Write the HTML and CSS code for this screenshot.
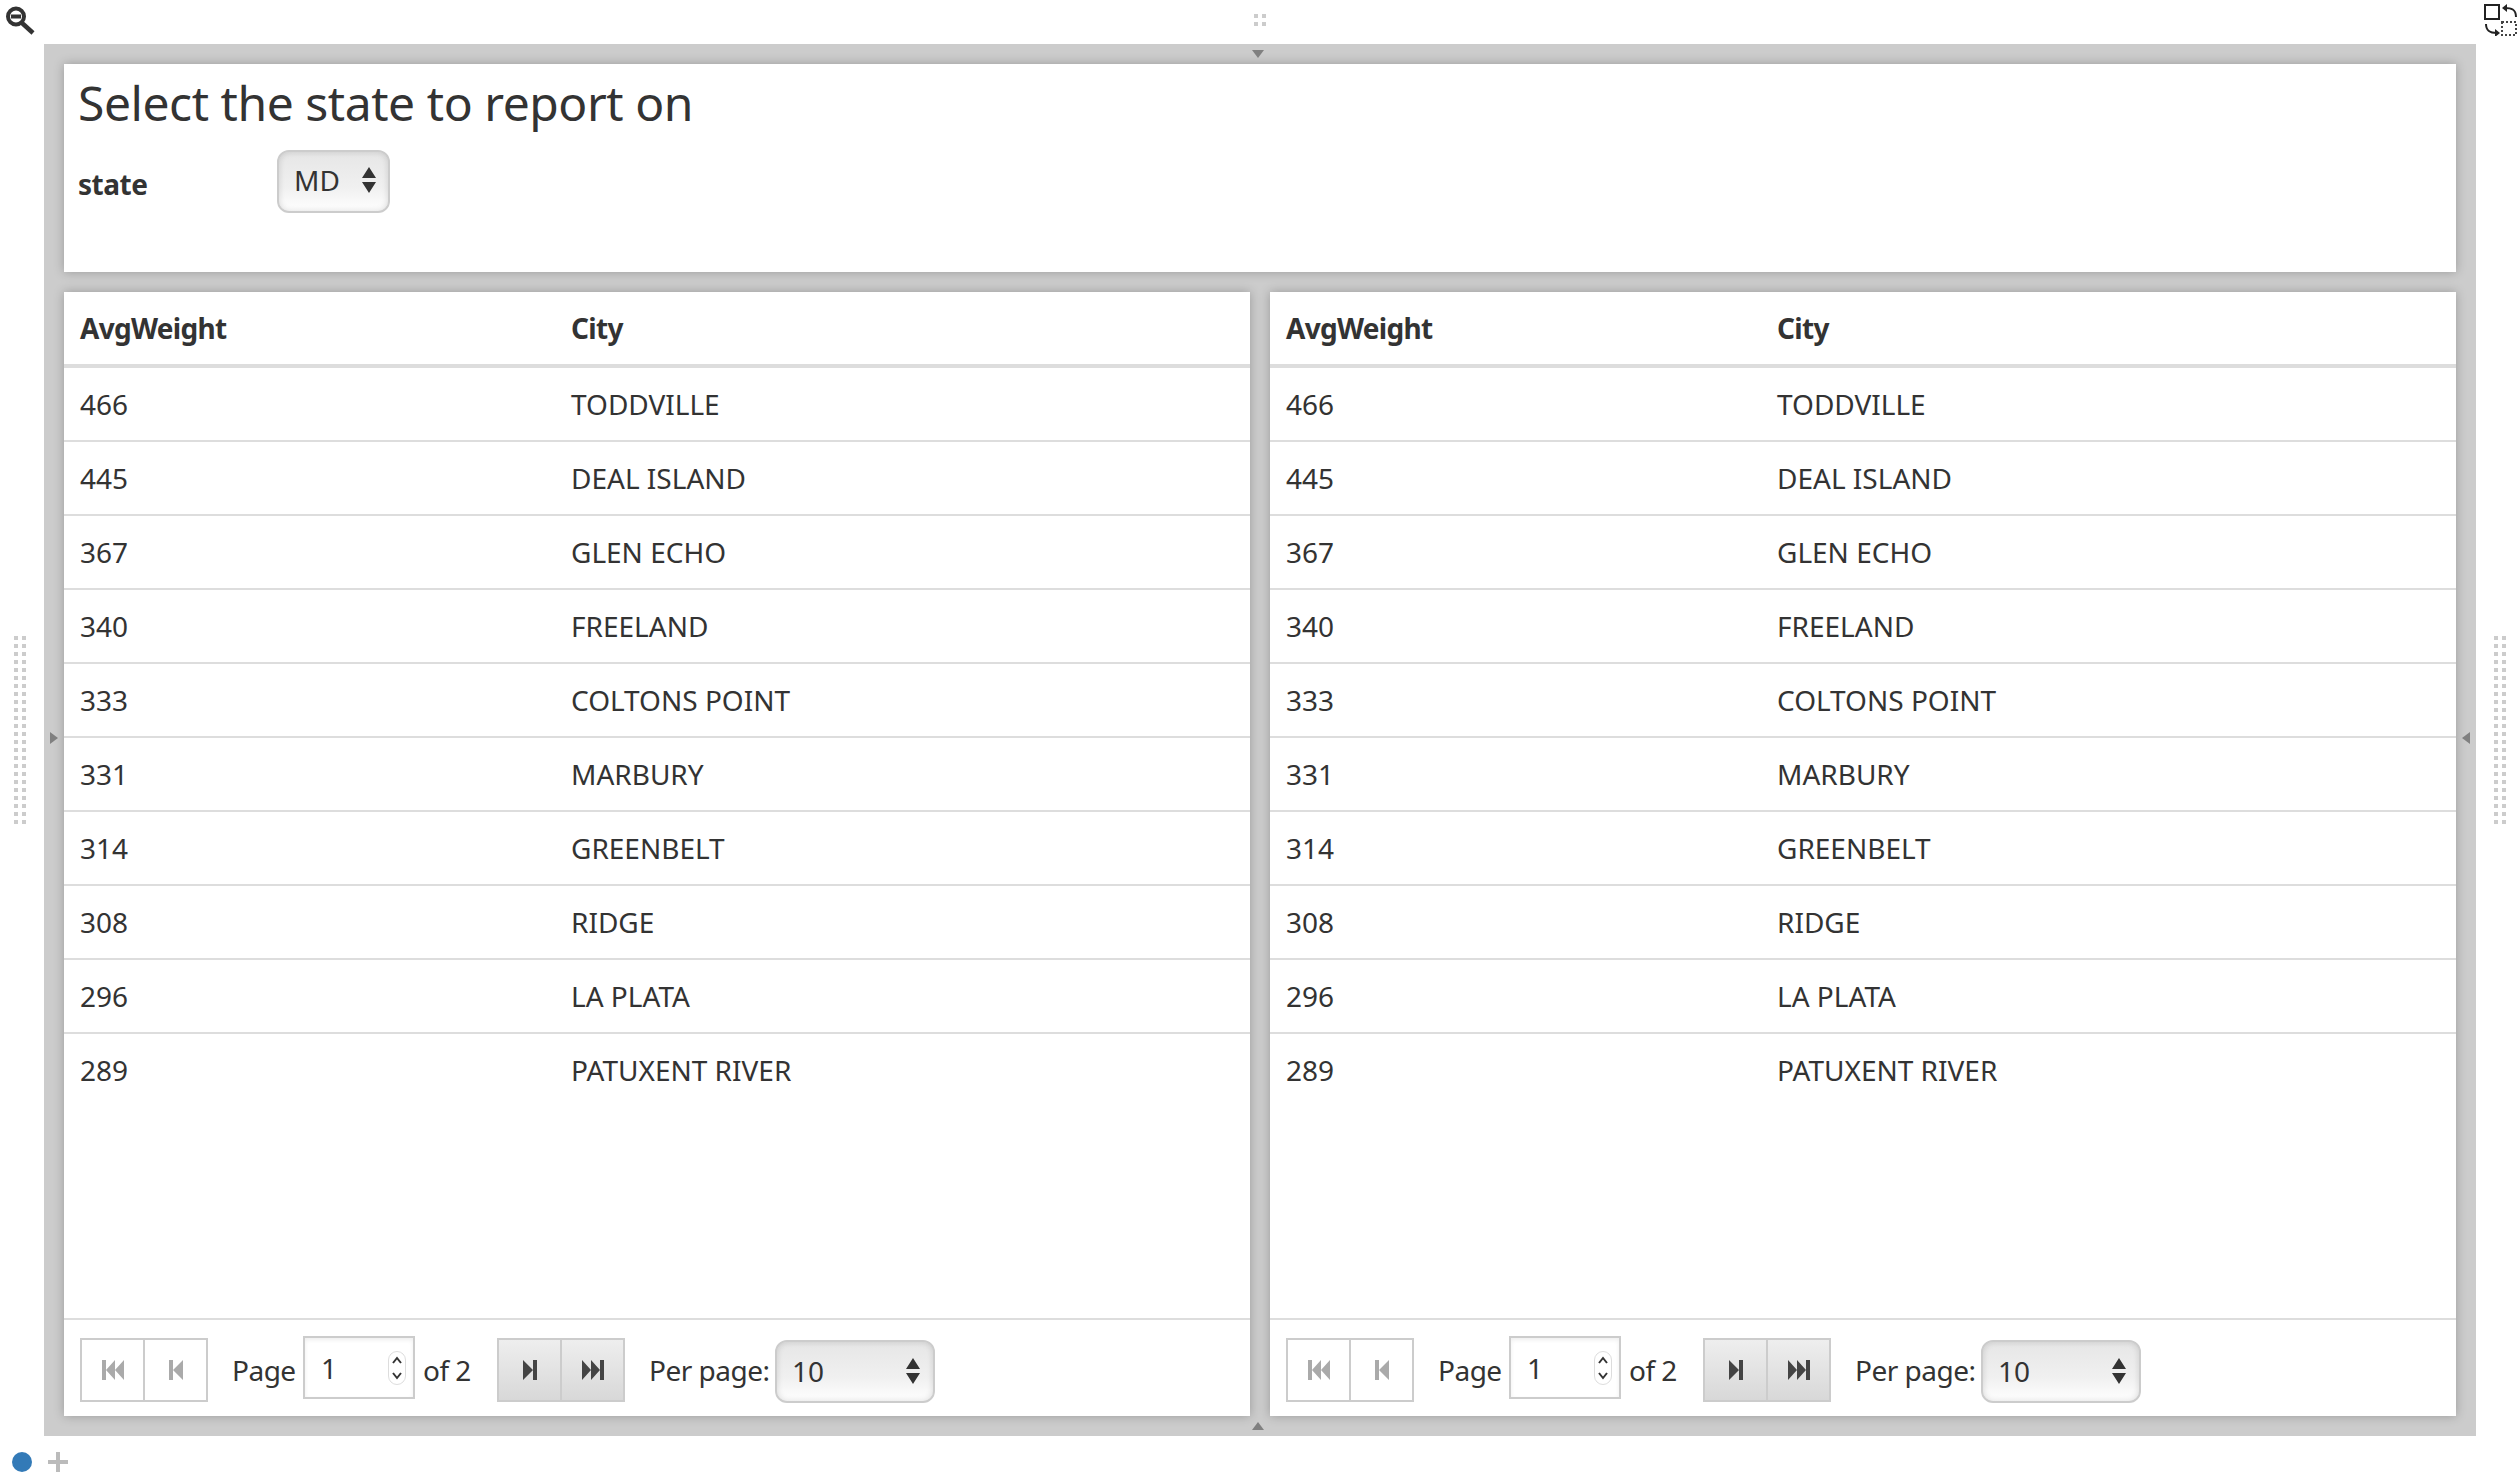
FILE: index.html
```html
<!DOCTYPE html>
<html lang="en">

<head>
    <meta charset="UTF-8">
    <meta name="viewport" content="width=device-width, initial-scale=1.0">
    <title>Report</title>
    <link rel="stylesheet" href="styles.css">
</head>

<body>
    <!-- top strip -->
    <div class="top-strip">
        <svg class="zoom-icon" width="29" height="29" viewBox="0 0 29 29">
            <circle cx="10" cy="10.5" r="8" fill="none" stroke="#333" stroke-width="4"/>
            <rect x="5" y="8.5" width="10" height="4" fill="#333"/>
            <path d="M16 17 L27 27" stroke="#333" stroke-width="4.5" fill="none"/>
        </svg>
        <span class="dots dots-top"></span>
        <svg class="swap-icon" width="34" height="32" viewBox="0 0 34 32">
            <rect x="1" y="1" width="14" height="14" fill="none" stroke="#222" stroke-width="2"/>
            <rect x="18" y="18" width="14" height="13" fill="none" stroke="#444" stroke-width="2" stroke-dasharray="2 2"/>
            <path d="M21 4 C27 4 32 5 32 13" fill="none" stroke="#222" stroke-width="2"/>
            <path d="M23 0 L18 4 L23 8 Z" fill="#222"/>
            <path d="M2 20 C2 27 6 29 13 29" fill="none" stroke="#222" stroke-width="2"/>
            <path d="M11 25 L16 29 L11 33 Z" fill="#222"/>
        </svg>
    </div>

    <div class="middle">
        <div class="gutter"><span class="dots dots-side"></span></div>

        <main class="frame">
            <span class="arrow arrow-top"></span>
            <span class="arrow arrow-bottom"></span>
            <span class="arrow arrow-left"></span>
            <span class="arrow arrow-right"></span>

            <section class="panel select-panel">
                <h3 class="panel-title">Select the state to report on</h3>
                <div class="form-row">
                    <label class="form-label">state</label>
                    <div class="select select-state">
                        <span>MD</span>
                        <svg width="16" height="26" viewBox="0 0 16 26">
                            <path d="M8 0 L15 11 H1 Z M1 15 H15 L8 26 Z" fill="#333"/>
                        </svg>
                    </div>
                </div>
            </section>

            <section class="panel table-panel">
                <table class="grid">
                    <thead>
                        <tr><th>AvgWeight</th><th>City</th></tr>
                    </thead>
                    <tbody>
                        <tr><td>466</td><td>TODDVILLE</td></tr>
                        <tr><td>445</td><td>DEAL ISLAND</td></tr>
                        <tr><td>367</td><td>GLEN ECHO</td></tr>
                        <tr><td>340</td><td>FREELAND</td></tr>
                        <tr><td>333</td><td>COLTONS POINT</td></tr>
                        <tr><td>331</td><td>MARBURY</td></tr>
                        <tr><td>314</td><td>GREENBELT</td></tr>
                        <tr><td>308</td><td>RIDGE</td></tr>
                        <tr><td>296</td><td>LA PLATA</td></tr>
                        <tr><td>289</td><td>PATUXENT RIVER</td></tr>
                    </tbody>
                </table>
                <div class="pager">
                    <div class="btn-group">
                        <span class="btn"><svg width="22" height="20" viewBox="0 0 22 20"><path d="M0 0 H4 V20 H0 Z M4 10 L13 0 V20 Z M13 10 L22 0 V20 Z" fill="#aaa"/></svg></span>
                        <span class="btn"><svg width="14" height="20" viewBox="0 0 14 20"><path d="M0 0 H4 V20 H0 Z M4 10 L14 0 V20 Z" fill="#aaa"/></svg></span>
                    </div>
                    <span class="pager-text page-label">Page</span>
                    <div class="page-input">
                        <span>1</span>
                        <svg class="spinner" width="18" height="34" viewBox="0 0 18 34">
                            <rect x="0.5" y="0.5" width="17" height="33" rx="8.5" fill="#fff" stroke="#ddd"/>
                            <path d="M5 12 L9 7 L13 12 M5 22 L9 27 L13 22" fill="none" stroke="#333" stroke-width="2"/>
                        </svg>
                    </div>
                    <span class="pager-text of-label">of 2</span>
                    <div class="btn-group btn-group-active">
                        <span class="btn"><svg width="14" height="20" viewBox="0 0 14 20"><path d="M14 0 H10 V20 H14 Z M10 10 L0 0 V20 Z" fill="#444"/></svg></span>
                        <span class="btn"><svg width="22" height="20" viewBox="0 0 22 20"><path d="M22 0 H18 V20 H22 Z M18 10 L9 0 V20 Z M9 10 L0 0 V20 Z" fill="#444"/></svg></span>
                    </div>
                    <span class="pager-text per-label">Per page:</span>
                    <div class="select select-per">
                        <span>10</span>
                        <svg width="16" height="26" viewBox="0 0 16 26">
                            <path d="M8 0 L15 11 H1 Z M1 15 H15 L8 26 Z" fill="#333"/>
                        </svg>
                    </div>
                </div>
            </section>

            <section class="panel table-panel">
                <table class="grid">
                    <thead>
                        <tr><th>AvgWeight</th><th>City</th></tr>
                    </thead>
                    <tbody>
                        <tr><td>466</td><td>TODDVILLE</td></tr>
                        <tr><td>445</td><td>DEAL ISLAND</td></tr>
                        <tr><td>367</td><td>GLEN ECHO</td></tr>
                        <tr><td>340</td><td>FREELAND</td></tr>
                        <tr><td>333</td><td>COLTONS POINT</td></tr>
                        <tr><td>331</td><td>MARBURY</td></tr>
                        <tr><td>314</td><td>GREENBELT</td></tr>
                        <tr><td>308</td><td>RIDGE</td></tr>
                        <tr><td>296</td><td>LA PLATA</td></tr>
                        <tr><td>289</td><td>PATUXENT RIVER</td></tr>
                    </tbody>
                </table>
                <div class="pager">
                    <div class="btn-group">
                        <span class="btn"><svg width="22" height="20" viewBox="0 0 22 20"><path d="M0 0 H4 V20 H0 Z M4 10 L13 0 V20 Z M13 10 L22 0 V20 Z" fill="#aaa"/></svg></span>
                        <span class="btn"><svg width="14" height="20" viewBox="0 0 14 20"><path d="M0 0 H4 V20 H0 Z M4 10 L14 0 V20 Z" fill="#aaa"/></svg></span>
                    </div>
                    <span class="pager-text page-label">Page</span>
                    <div class="page-input">
                        <span>1</span>
                        <svg class="spinner" width="18" height="34" viewBox="0 0 18 34">
                            <rect x="0.5" y="0.5" width="17" height="33" rx="8.5" fill="#fff" stroke="#ddd"/>
                            <path d="M5 12 L9 7 L13 12 M5 22 L9 27 L13 22" fill="none" stroke="#333" stroke-width="2"/>
                        </svg>
                    </div>
                    <span class="pager-text of-label">of 2</span>
                    <div class="btn-group btn-group-active">
                        <span class="btn"><svg width="14" height="20" viewBox="0 0 14 20"><path d="M14 0 H10 V20 H14 Z M10 10 L0 0 V20 Z" fill="#444"/></svg></span>
                        <span class="btn"><svg width="22" height="20" viewBox="0 0 22 20"><path d="M22 0 H18 V20 H22 Z M18 10 L9 0 V20 Z M9 10 L0 0 V20 Z" fill="#444"/></svg></span>
                    </div>
                    <span class="pager-text per-label">Per page:</span>
                    <div class="select select-per">
                        <span>10</span>
                        <svg width="16" height="26" viewBox="0 0 16 26">
                            <path d="M8 0 L15 11 H1 Z M1 15 H15 L8 26 Z" fill="#333"/>
                        </svg>
                    </div>
                </div>
            </section>
        </main>

        <div class="gutter gutter-right"><span class="dots dots-side"></span></div>
    </div>

    <!-- tabs at the bottom -->
    <div class="bottom-strip">
        <span class="tab-dot"></span>
        <span class="tab-add"></span>
    </div>
</body>

</html>
```

FILE: styles.css
```css
/* page */
body {
    margin: 0;
    width: 2520px;
    height: 1479px;
    overflow: hidden;
    background-color: white;
    color: #333;
    font-family: "Noto Sans", sans-serif;
    font-size: 28px;
    line-height: 40px;
    display: flex;
    flex-direction: column;
}

/* grab handles */
.dots {
    display: block;
    background-image: conic-gradient(from 270deg, #ccc 25%, transparent 0);
    background-size: 8px 8px;
}

.dots-top {
    width: 12px;
    height: 12px;
    margin-top: 14px;
    margin-left: 1219px;
}

.dots-side {
    width: 12px;
    height: 188px;
}

/* top strip */
.top-strip {
    height: 44px;
    display: flex;
    align-items: flex-start;
    flex: none;
}

.zoom-icon {
    margin: 6px 0 0 6px;
    flex: none;
}

.swap-icon {
    margin: 4px 0 0 1218px;
    flex: none;
}

/* middle row */
.middle {
    height: 1392px;
    display: flex;
    flex: none;
}

.gutter {
    width: 44px;
    flex: none;
    display: flex;
    padding: 592px 0 0 14px;
    box-sizing: border-box;
}

.gutter-right {
    padding-left: 18px;
}

.frame {
    position: relative;
    width: 2432px;
    box-sizing: border-box;
    padding: 20px;
    background-color: #ccc;
    display: grid;
    grid-template-columns: 1186px 1186px;
    grid-template-rows: 208px 1124px;
    gap: 20px;
}

/* small triangles on the frame */
.arrow {
    position: absolute;
    width: 0;
    height: 0;
    border-style: solid;
    border-color: transparent;
}

.arrow-top {
    top: 6px;
    left: 1208px;
    border-width: 8px 6px 0 6px;
    border-top-color: #808080;
}

.arrow-bottom {
    bottom: 6px;
    left: 1208px;
    border-width: 0 6px 8px 6px;
    border-bottom-color: #808080;
}

.arrow-left {
    top: 688px;
    left: 6px;
    border-width: 6px 0 6px 8px;
    border-left-color: #808080;
}

.arrow-right {
    top: 688px;
    right: 6px;
    border-width: 6px 8px 6px 0;
    border-right-color: #808080;
}

/* panels */
.panel {
    background-color: white;
    box-shadow: 0 0 10px rgba(0, 0, 0, 0.25);
}

.select-panel {
    grid-column: 1 / 3;
    padding: 12px 14px;
    box-sizing: border-box;
}

.panel-title {
    margin: 0;
    font-size: 48px;
    font-weight: 400;
    line-height: 54px;
    letter-spacing: -0.45px;
}

.form-row {
    display: flex;
    align-items: center;
    margin-top: 20px;
}

.form-label {
    width: 199px;
    font-weight: 700;
    padding-top: 4px;
    letter-spacing: -0.5px;
}

/* table */
.table-panel {
    display: flex;
    flex-direction: column;
}

.grid {
    border-collapse: collapse;
    width: 100%;
    table-layout: fixed;
}

.grid th,
.grid td {
    text-align: left;
    padding: 16px;
    height: 40px;
    box-sizing: content-box;
}

.grid th {
    border-bottom: 4px solid #ddd;
    letter-spacing: -0.7px;
}

.grid th:first-child,
.grid td:first-child {
    width: 459px;
}

.grid tbody tr + tr td {
    border-top: 2px solid #ddd;
}

/* pager */
.pager {
    margin-top: auto;
    height: 98px;
    box-sizing: border-box;
    border-top: 2px solid #ddd;
    padding: 18px 16px 0;
    display: flex;
    align-items: flex-start;
}

.btn-group {
    display: flex;
    width: 128px;
    height: 64px;
    box-sizing: border-box;
    border: 2px solid #ccc;
    flex: none;
}

.btn {
    flex: 1;
    display: flex;
    align-items: center;
    justify-content: center;
}

.btn + .btn {
    border-left: 2px solid #ccc;
}

.btn-group-active {
    background: linear-gradient(#eee, #d8d8d8);
}

.pager-text {
    line-height: 64px;
    white-space: nowrap;
    letter-spacing: -0.5px;
    flex: none;
}

.page-label {
    margin-left: 24px;
    width: 71px;
}

.page-input {
    width: 112px;
    height: 63px;
    box-sizing: border-box;
    margin-top: -2px;
    border: 2px solid #ccc;
    padding-left: 16px;
    display: flex;
    align-items: center;
    justify-content: space-between;
    padding-right: 7px;
    box-shadow: inset 0 2px 4px rgba(0, 0, 0, 0.07);
    flex: none;
}

.of-label {
    margin-left: 8px;
    width: 74px;
}

.per-label {
    margin-left: 24px;
    width: 126px;
}

.select {
    box-sizing: border-box;
    height: 63px;
    border: 2px solid #ccc;
    border-radius: 12px;
    background: linear-gradient(#e6e6e6, #f0f0f0 60%, #fff);
    box-shadow: inset 0 0 6px rgba(0, 0, 0, 0.14);
    display: flex;
    align-items: center;
    justify-content: space-between;
    flex: none;
}

.select-state {
    width: 113px;
    padding: 0 11px 4px 15px;
}

.select-per {
    width: 160px;
    margin-top: 2px;
    padding: 0 12px 2px 15px;
}

/* tabs */
.bottom-strip {
    display: flex;
    align-items: center;
    gap: 16px;
    padding: 16px 0 0 12px;
}

.tab-dot {
    width: 20px;
    height: 20px;
    border-radius: 50%;
    background-color: #337ab7;
}

.tab-add {
    width: 20px;
    height: 20px;
    background-image: linear-gradient(#bbb, #bbb), linear-gradient(#bbb, #bbb);
    background-size: 4px 20px, 20px 4px;
    background-position: center;
    background-repeat: no-repeat;
}
```
